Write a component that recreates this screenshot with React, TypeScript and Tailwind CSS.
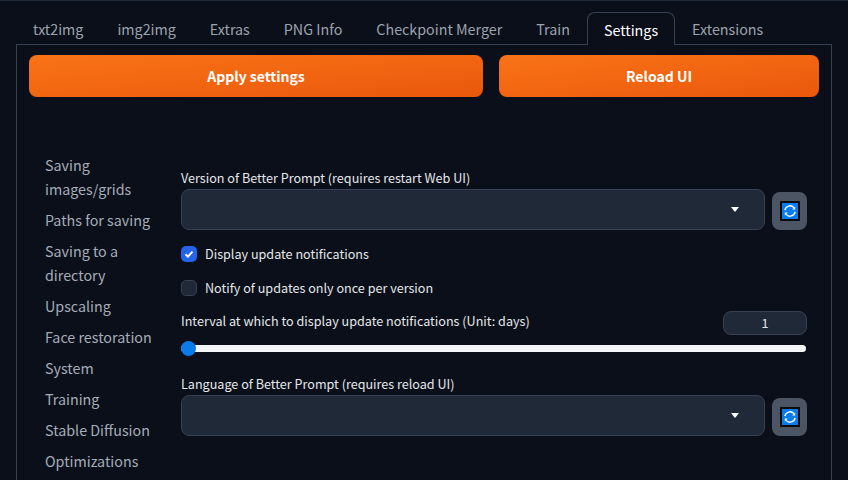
const font = { fontFamily: '"Noto Sans CJK SC", "Noto Sans", sans-serif' };

const tabs = ["txt2img", "img2img", "Extras", "PNG Info", "Checkpoint Merger", "Train", "Settings", "Extensions"];

const sections = [
  "Saving images/grids",
  "Paths for saving",
  "Saving to a directory",
  "Upscaling",
  "Face restoration",
  "System",
  "Training",
  "Stable Diffusion",
  "Optimizations",
];

function RefreshIcon() {
  return (
    <svg width="20" height="20" viewBox="0 0 20 20">
      <rect width="20" height="20" fill="#0b0b0b" />
      <rect x="2" y="2" width="16" height="16" fill="#0a7bea" />
      <path d="M4.9 9.2A5.2 5.2 0 0 1 13.9 6.6M15.1 10.8A5.2 5.2 0 0 1 6.1 13.4" fill="none" stroke="#fff" strokeWidth="1.4" />
      <path d="M15.2 5.4v3h-3zM4.8 14.6v-3h3z" fill="#fff" />
    </svg>
  );
}

function SelectRow({ label }: { label: string }) {
  return (
    <div>
      <div className="h-[21px] text-[12.6px] leading-[20px] text-[#e5e7eb]">{label}</div>
      <div className="flex items-end gap-[7px]">
        <div className="flex h-[41px] w-[584px] items-center justify-end rounded-lg border border-[#374151] bg-[#1f2937] pr-[25px]">
          <div className="h-0 w-0 border-x-[4px] border-t-[5px] border-x-transparent border-t-white" />
        </div>
        <button className="flex h-[38px] w-[35px] items-center justify-center rounded-lg bg-[#4b5563]">
          <RefreshIcon />
        </button>
      </div>
    </div>
  );
}

function Check({ checked, label }: { checked?: boolean; label: string }) {
  return (
    <div className="flex h-4 items-center gap-2">
      <div
        className={
          checked
            ? "flex h-4 w-4 items-center justify-center rounded-[5px] bg-[#2563eb]"
            : "h-4 w-4 rounded-[5px] border border-[#374151] bg-[#1f2937]"
        }
      >
        {checked && (
          <svg width="12" height="12" viewBox="0 0 12 12">
            <path d="M2.5 6.2l2.4 2.4 4.6-5" fill="none" stroke="#fff" strokeWidth="2" />
          </svg>
        )}
      </div>
      <span className="text-[12.6px] leading-[20px] text-[#e5e7eb]">{label}</span>
    </div>
  );
}

export default function App() {
  return (
    <div className="h-[480px] w-[848px] overflow-hidden border-t border-[#1f2937] bg-[#0b0f19] px-4" style={font}>
      <div className="flex h-[43px] items-end">
        {tabs.map((t) =>
          t === "Settings" ? (
            <div
              key={t}
              className="relative z-10 -mb-px flex h-[33px] items-center whitespace-nowrap rounded-t-lg border border-b-0 border-[#374151] bg-[#0b0f19] px-4 pt-[2px] text-[14.3px] text-white"
            >
              {t}
            </div>
          ) : (
            <div
              key={t}
              className="flex h-[32px] items-center whitespace-nowrap border border-transparent px-4 pt-[2px] text-[14.3px] text-[#9ca3af]"
            >
              {t}
            </div>
          )
        )}
      </div>
      <div className="h-[500px] w-[816px] border border-[#374151] px-3 pt-[10px]">
        <div className="flex gap-4">
          <button className="h-[42px] w-[454px] rounded-lg bg-gradient-to-br from-[#f97316] to-[#ea580c] text-[14px] font-semibold text-white">
            Apply settings
          </button>
          <button className="h-[42px] w-[320px] rounded-lg bg-gradient-to-br from-[#f97316] to-[#ea580c] text-[14px] font-semibold text-white">
            Reload UI
          </button>
        </div>
        <div className="mt-[56px] flex">
          <div className="flex w-[152px] flex-col gap-[7px] pl-4">
            {sections.map((s) => (
              <div key={s} className="w-[112px] text-[14.3px] leading-[24px] text-[#a5adb9]">
                {s}
              </div>
            ))}
          </div>
          <div className="w-[626px] pt-[15px]">
            <SelectRow label="Version of Better Prompt (requires restart Web UI)" />
            <div className="mt-4 flex flex-col gap-[18px]">
              <Check checked label="Display update notifications" />
              <Check label="Notify of updates only once per version" />
            </div>
            <div className="mt-[15px] flex items-start justify-between">
              <span className="text-[12.6px] leading-[20px] text-[#e5e7eb]">
                Interval at which to display update notifications (Unit: days)
              </span>
              <div className="flex h-[24px] w-[84px] items-center justify-center rounded-lg border border-[#374151] bg-[#1f2937] text-[12.6px] text-[#e5e7eb]">
                1
              </div>
            </div>
            <div className="relative mt-[8px] h-[11px]">
              <div className="absolute left-0 right-px top-[2px] h-[7px] rounded-full bg-[#f3f4f6]" />
              <div className="absolute left-0 top-[-2px] h-[15px] w-[15px] rounded-full bg-[#0a7bea]" />
            </div>
            <div className="mt-[20px]">
              <SelectRow label="Language of Better Prompt (requires reload UI)" />
            </div>
          </div>
        </div>
      </div>
    </div>
  );
}
